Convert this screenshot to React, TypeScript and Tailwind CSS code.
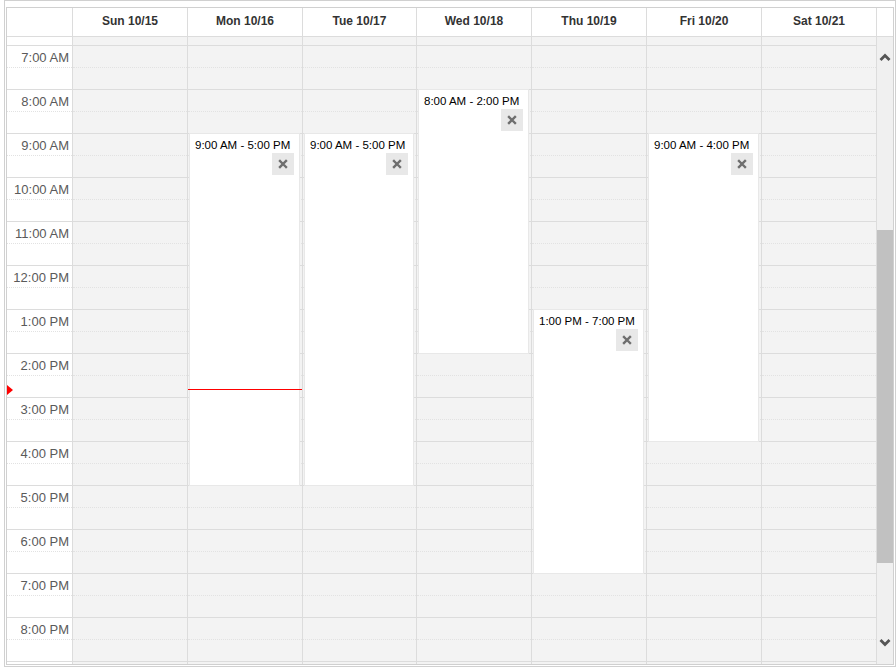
import React from "react";

type Ev = { start: number; end: number; text: string };

const days: { label: string; w: string; ev?: Ev; now?: boolean }[] = [
  { label: "Sun 10/15", w: "w-[115px]" },
  { label: "Mon 10/16", w: "w-[115px]", ev: { start: 9, end: 17, text: "9:00 AM - 5:00 PM" }, now: true },
  { label: "Tue 10/17", w: "w-[114px]", ev: { start: 9, end: 17, text: "9:00 AM - 5:00 PM" } },
  { label: "Wed 10/18", w: "w-[115px]", ev: { start: 8, end: 14, text: "8:00 AM - 2:00 PM" } },
  { label: "Thu 10/19", w: "w-[115px]", ev: { start: 13, end: 19, text: "1:00 PM - 7:00 PM" } },
  { label: "Fri 10/20", w: "w-[115px]", ev: { start: 9, end: 16, text: "9:00 AM - 4:00 PM" } },
  { label: "Sat 10/21", w: "w-[115px]" },
];

const hours = Array.from({ length: 14 }, (_, i) => 7 + i);

function fmt(h: number) {
  const ap = h < 12 ? "AM" : "PM";
  const hh = h % 12 === 0 ? 12 : h % 12;
  return `${hh}:00 ${ap}`;
}

function Cells() {
  return (
    <>
      <div className="h-[9px] border-b border-[#dcdcdc]" />
      {hours.map((h) => (
        <React.Fragment key={h}>
          <div className="h-[22px] border-b border-dotted border-[#e2e2e2]" />
          <div className="h-[22px] border-b border-[#dcdcdc]" />
        </React.Fragment>
      ))}
      <div className="h-[2px]" />
    </>
  );
}

function EventBox({ ev }: { ev: Ev }) {
  const top = 96 + (ev.start - 9) * 44;
  const height = (ev.end - ev.start) * 44 + 1;
  return (
    <div
      className="absolute left-[1px] right-[2px] bg-white border border-[#e8e8e8]"
      style={{ top, height }}
    >
      <div className="pl-[5px] pt-[4px] text-[11.5px] leading-[14px] text-black whitespace-nowrap">
        {ev.text}
      </div>
      <div className="absolute right-[5px] top-[19px] w-[22px] h-[22px] bg-[#e8e8e8] flex items-center justify-center">
        <svg width="10" height="10" viewBox="0 0 10 10">
          <path d="M2 2 L8 8 M8 2 L2 8" stroke="#6e6e6e" strokeWidth="2.4" strokeLinecap="square" />
        </svg>
      </div>
    </div>
  );
}

export default function App() {
  return (
    <div className="w-[896px] h-[668px] bg-white font-['Liberation_Sans',Arial,sans-serif] overflow-hidden">
      <div className="ml-[4px] w-[892px] h-[667px] border border-[#d0d0d0]">
        <div className="ml-[1px] mt-[6px] w-[888px] h-[658px] border border-[#d0d0d0] flex flex-col">
          {/* header */}
          <div className="flex h-[29px] border-b border-[#dcdcdc] bg-white">
            <div className="w-[66px] border-r border-[#dcdcdc]" />
            {days.map((d) => (
              <div
                key={d.label}
                className={`${d.w} border-r border-[#dcdcdc] flex items-center justify-center pb-[2px] text-[12px] font-bold text-[#333]`}
              >
                {d.label}
              </div>
            ))}
            <div className="w-[16px]" />
          </div>
          {/* body */}
          <div className="flex h-[627px] overflow-hidden">
            <div className="relative w-[66px] border-r border-[#dcdcdc] bg-white">
              <div className="h-[9px] border-b border-[#dcdcdc]" />
              {hours.map((h) => (
                <React.Fragment key={h}>
                  <div className="h-[22px] border-b border-dotted border-[#e2e2e2] text-right pr-[3px] pt-[4px] text-[13px] leading-[15px] text-[#5a5a5a] whitespace-nowrap">
                    {fmt(h)}
                  </div>
                  <div className="h-[22px] border-b border-[#dcdcdc]" />
                </React.Fragment>
              ))}
              <div className="absolute left-0 top-[348px] w-0 h-0 border-l-[6px] border-l-[#ff0000] border-y-[5px] border-y-transparent" />
            </div>
            {days.map((d) => (
              <div key={d.label} className={`relative ${d.w} border-r border-[#dcdcdc] bg-[#f3f3f3]`}>
                <Cells />
                {d.ev && <EventBox ev={d.ev} />}
                {d.now && <div className="absolute left-0 right-0 top-[352px] h-px bg-[#ff0000]" />}
              </div>
            ))}
            <div className="relative w-[16px] bg-[#f0f0f0]">
              <svg className="absolute left-[2px] top-[16px]" width="12" height="9" viewBox="0 0 12 9">
                <path d="M1.5 7 L6 2.5 L10.5 7" fill="none" stroke="#555" strokeWidth="2.8" />
              </svg>
              <div className="absolute left-0 right-0 top-[193px] h-[333px] bg-[#c1c1c1]" />
              <svg className="absolute left-[2px] top-[601px]" width="12" height="9" viewBox="0 0 12 9">
                <path d="M1.5 2 L6 6.5 L10.5 2" fill="none" stroke="#555" strokeWidth="2.8" />
              </svg>
            </div>
          </div>
        </div>
      </div>
    </div>
  );
}
